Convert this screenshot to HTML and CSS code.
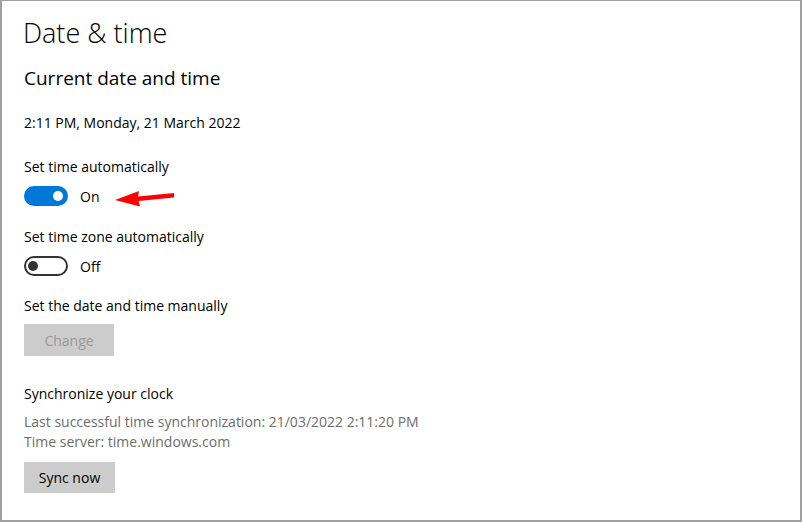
FILE: index.html
```html
<!DOCTYPE html>
<html lang="en">
<head>
    <meta charset="UTF-8">
    <title>Date &amp; time</title>
    <link rel="stylesheet" href="styles.css">
</head>
<body>
    <div class="panel">
        <h1>Date &amp; time</h1>
        <h2>Current date and time</h2>
        <p class="now">2:11 PM, Monday, 21 March 2022</p>

        <p class="label first">Set time automatically</p>
        <div class="switch-row">
            <span class="switch on"><span class="knob"></span></span>
            <span>On</span>
        </div>

        <p class="label mid">Set time zone automatically</p>
        <div class="switch-row">
            <span class="switch"><span class="knob"></span></span>
            <span>Off</span>
        </div>

        <p class="label">Set the date and time manually</p>
        <button class="btn" disabled>Change</button>

        <p class="label sync">Synchronize your clock</p>
        <p class="info first-info">Last successful time synchronization: 21/03/2022 2:11:20 PM</p>
        <p class="info">Time server: time.windows.com</p>
        <button class="btn sync-btn">Sync now</button>

        <!-- red arrow pointing at the toggle -->
        <svg class="arrow" width="70" height="26" viewBox="0 0 70 26">
            <path d="M61 7 L25 10.5 L26 5 L2 14 L27 20.5 L25.5 15 L61 11.5 Z" fill="#f00"/>
        </svg>
    </div>
</body>
</html>
```

FILE: styles.css
```css
body {
    margin: 0;
    font-family: "Open Sans", "Noto Sans", sans-serif;
    color: #000;
    background: #fff;
}
.panel {
    position: relative;
    height: 522px;
    box-sizing: border-box;
    border: 2px solid #a0a0a0;
    border-top-width: 1px;
    padding-left: 22px;
}
h1 {
    margin: 12px 0 0;
    font-size: 27px;
    font-weight: 300;
    line-height: 40px;
    margin-left: -1px;
}
h2 {
    margin: 11px 0 0;
    font-size: 19px;
    font-weight: 400;
    line-height: 28px;
}
p {
    margin: 0;
    font-size: 14px;
    line-height: 20px;
}
.now {
    margin-top: 21px;
}
.label {
    margin-top: 20px;
}
.label.first {
    margin-top: 24px;
}
.label.mid {
    margin-top: 21px;
}
.switch-row {
    display: flex;
    align-items: center;
    gap: 12px;
    margin-top: 9px;
    height: 20px;
    font-size: 14px;
}
.switch {
    display: flex;
    align-items: center;
    width: 44px;
    height: 20px;
    box-sizing: border-box;
    border: 2px solid #333;
    border-radius: 10px;
    padding: 0 2px;
}
.switch .knob {
    width: 10px;
    height: 10px;
    border-radius: 50%;
    background: #333;
}
.switch.on {
    background: #0078d7;
    border-color: #0078d7;
    justify-content: flex-end;
    padding: 0 3px;
}
.switch.on .knob {
    background: #fff;
}
.btn {
    display: block;
    margin-top: 8px;
    width: 90px;
    height: 32px;
    border: none;
    background: #cccccc;
    font-family: inherit;
    font-size: 14px;
    color: #000;
    padding: 0;
}
.btn:disabled {
    color: #999;
}
.label.sync {
    margin-top: 28px;
}
.info {
    color: #6d6d6d;
}
.first-info {
    margin-top: 8px;
}
.sync-btn {
    margin-top: 10px;
    width: 91px;
    height: 31px;
}
.arrow {
    position: absolute;
    left: 111px;
    top: 185px;
}
```
